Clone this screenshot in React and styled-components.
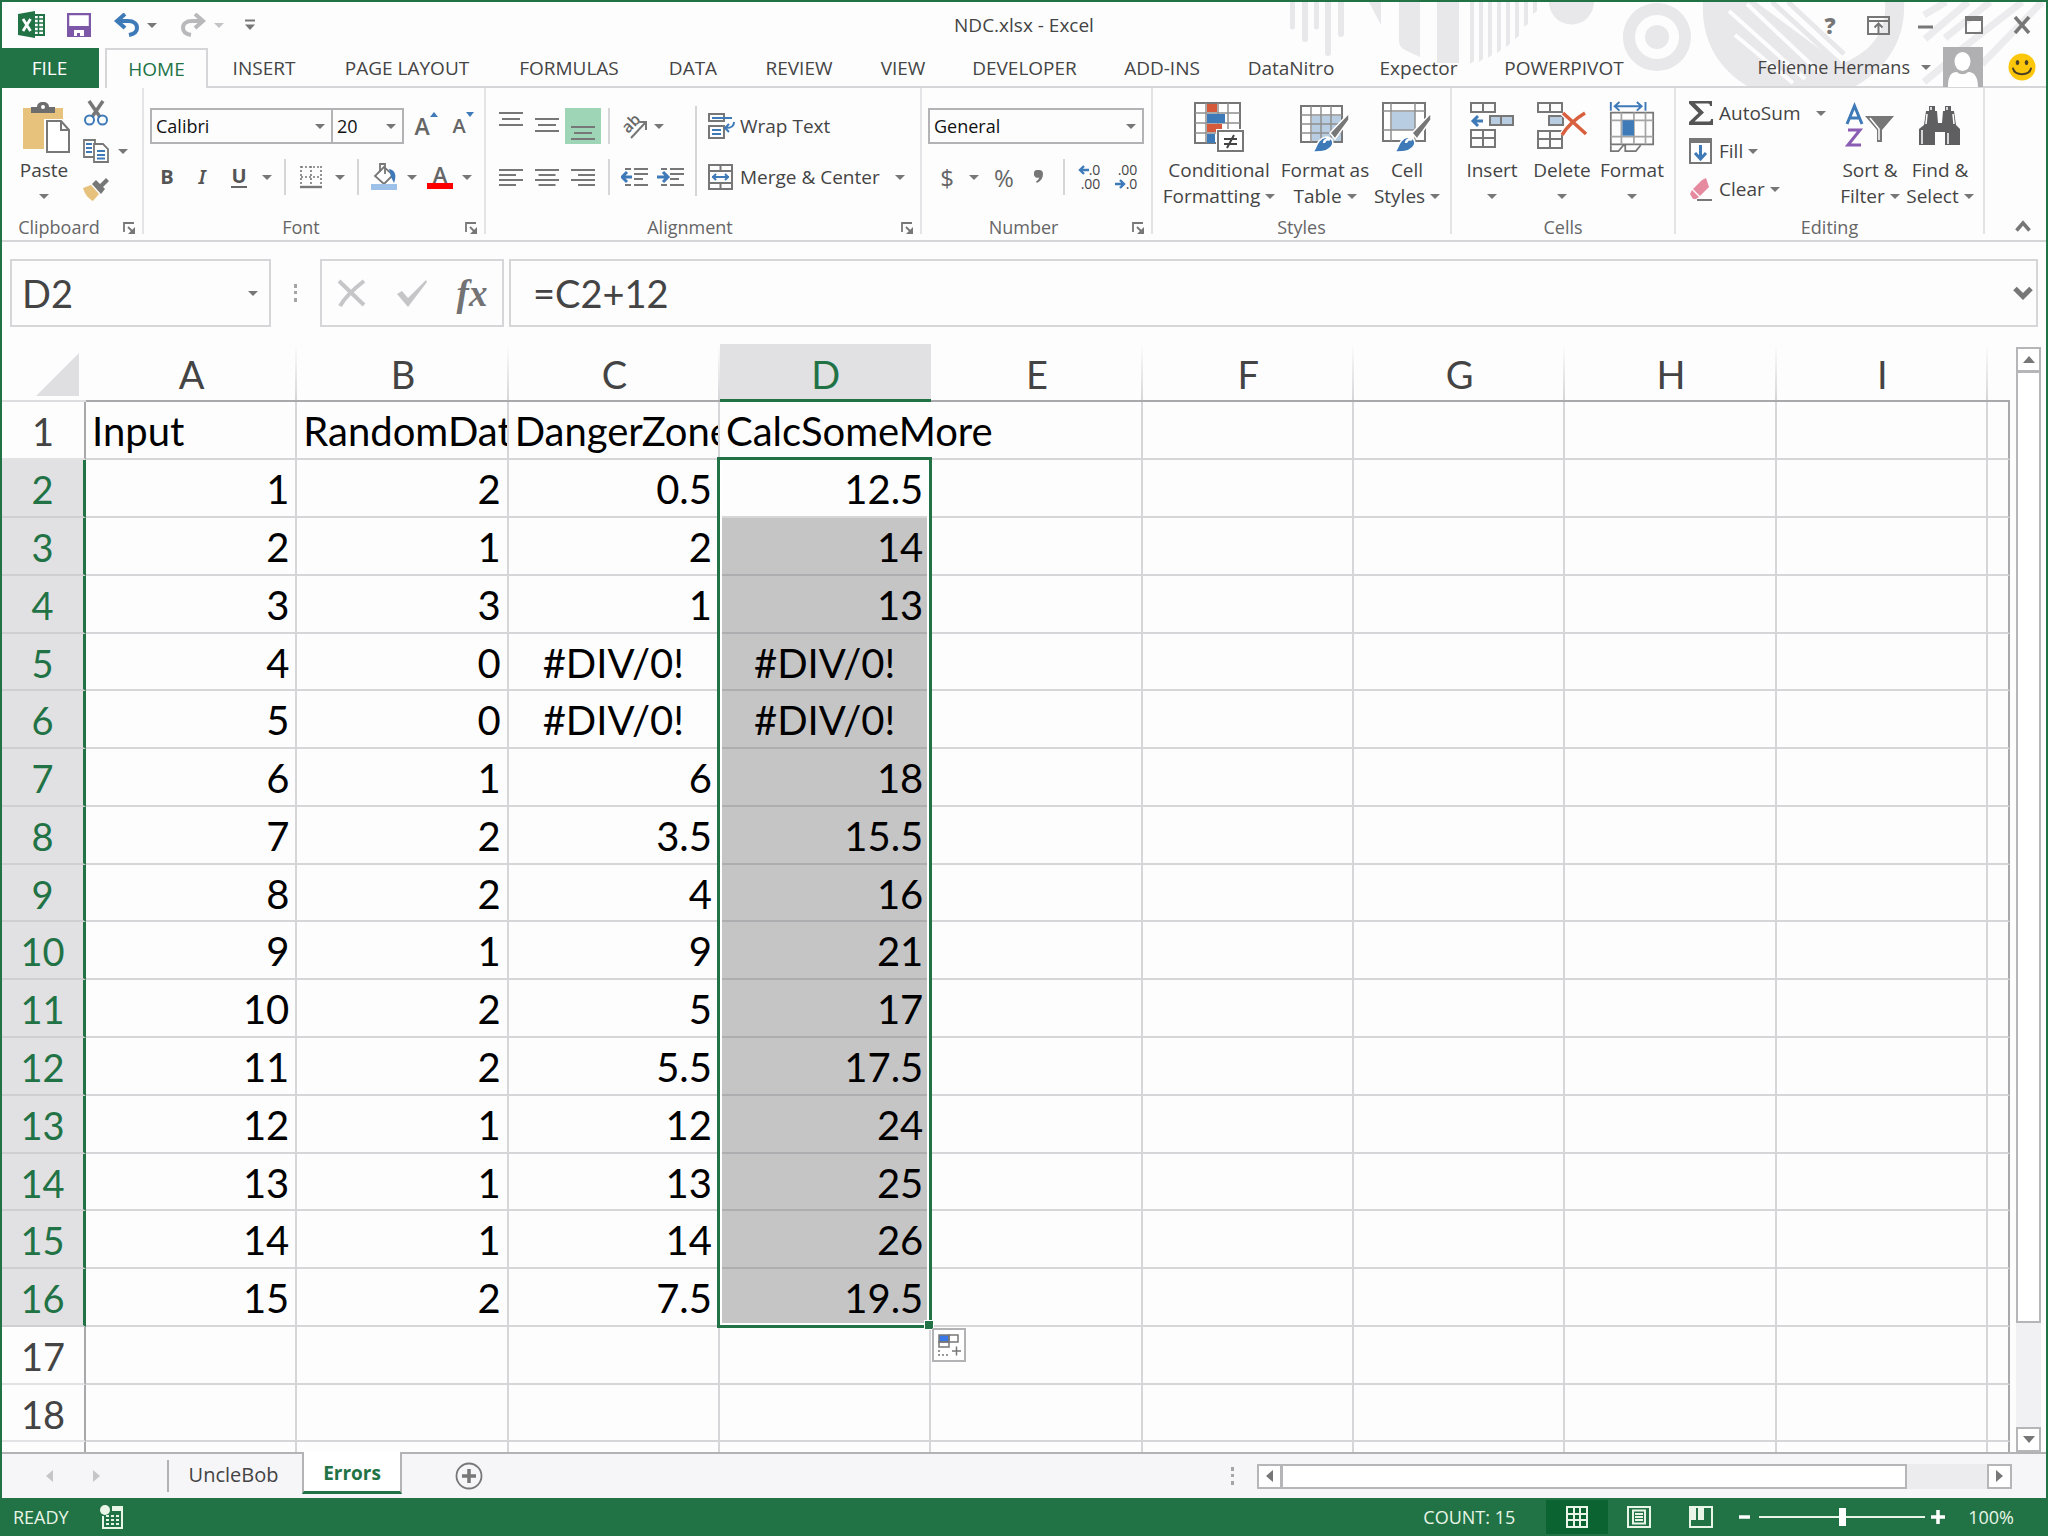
import React from 'react';
import styled, { createGlobalStyle, css } from 'styled-components';

const GREEN = '#217346';
const GREY = '#777777';
const BLUE = '#3f7ab8';
const LINE = '#d6d6d9';

const COLUMNS = ['A', 'B', 'C', 'D', 'E', 'F', 'G', 'H', 'I'];

const ROWS = [
  ['Input', 'RandomData', 'DangerZone', 'CalcSomeMore'],
  [1, 2, 0.5, 12.5],
  [2, 1, 2, 14],
  [3, 3, 1, 13],
  [4, 0, '#DIV/0!', '#DIV/0!'],
  [5, 0, '#DIV/0!', '#DIV/0!'],
  [6, 1, 6, 18],
  [7, 2, 3.5, 15.5],
  [8, 2, 4, 16],
  [9, 1, 9, 21],
  [10, 2, 5, 17],
  [11, 2, 5.5, 17.5],
  [12, 1, 12, 24],
  [13, 1, 13, 25],
  [14, 1, 14, 26],
  [15, 2, 7.5, 19.5],
  [],
  [],
];

const TABS = [
  { name: 'INSERT', width: 112 },
  { name: 'PAGE LAYOUT', width: 174 },
  { name: 'FORMULAS', width: 150 },
  { name: 'DATA', width: 98 },
  { name: 'REVIEW', width: 114 },
  { name: 'VIEW', width: 94 },
  { name: 'DEVELOPER', width: 149 },
  { name: 'ADD-INS', width: 126 },
  { name: 'DataNitro', width: 132 },
  { name: 'Expector', width: 123 },
  { name: 'POWERPIVOT', width: 168 },
];

function App() {
  return (
    <Window>
      <GlobalStyle />
      <Header>
        <Decoration />
        <TitleBar />
        <RibbonTabs />
      </Header>
      <Ribbon />
      <FormulaBar />
      <Sheet />
      <SheetBar />
      <StatusBar />
    </Window>
  );
}

export default App;

function TitleBar() {
  return (
    <TitleRow>
      <QuickAccess>
        <ExcelLogo />
        <Tool $w={66} aria-label="Save"><SaveIcon /></Tool>
        <Tool $w={30} aria-label="Undo"><UndoIcon color={BLUE} /></Tool>
        <Tool $w={20} aria-label="Undo list"><Caret /></Tool>
        <RedoTool $w={30} aria-label="Redo"><RedoIcon /></RedoTool>
        <Tool $w={22} aria-label="Redo list"><Caret $color="#c4c4c6" /></Tool>
        <Tool $w={40} aria-label="Customize Quick Access Toolbar">
          <svg width="12" height="12" viewBox="0 0 12 12">
            <path d="M1 1.5h10" stroke={GREY} strokeWidth="2" />
            <path d="M1 5.500h10L6 11z" fill={GREY} />
          </svg>
        </Tool>
      </QuickAccess>
      <Title>NDC.xlsx - Excel</Title>
      <WindowButtons>
        <Tool $w={48} aria-label="Help"><HelpMark>?</HelpMark></Tool>
        <Tool $w={48} aria-label="Ribbon display options">
          <svg width="23" height="19" viewBox="0 0 23 19" fill="none" stroke={GREY} strokeWidth="2">
            <path d="M1 1h21v17H1zM1 5h21M11.500 17V8M7.500 11.500l4-4 4 4" />
          </svg>
        </Tool>
        <Tool $w={48} aria-label="Minimize">
          <svg width="18" height="18" viewBox="0 0 18 18"><path d="M1 11h15" stroke={GREY} strokeWidth="3" /></svg>
        </Tool>
        <Tool $w={48} aria-label="Maximize">
          <svg width="18" height="18" viewBox="0 0 18 18"><path d="M1 1h16v16H1z" fill="none" stroke={GREY} strokeWidth="2" /><path d="M0 0h18v5H0z" fill={GREY} /></svg>
        </Tool>
        <Tool $w={48} aria-label="Close">
          <svg width="18" height="18" viewBox="0 0 18 18"><path d="M2 1l14 16M16 1L2 17" stroke={GREY} strokeWidth="3.500" /></svg>
        </Tool>
      </WindowButtons>
    </TitleRow>
  );
}

function RibbonTabs() {
  return (
    <TabRow>
      <FileTab>FILE</FileTab>
      <HomeTab>HOME</HomeTab>
      {TABS.map((tab) => (
        <Tab key={tab.name} $w={tab.width}>{tab.name}</Tab>
      ))}
      <TabFill />
      <Account>
        <AccountName>Felienne Hermans <Caret /></AccountName>
        <svg width="40" height="40" viewBox="0 0 40 40">
          <path d="M0 0h40v40H0z" fill="#b0afb2" />
          <ellipse cx="19.500" cy="14.500" rx="8" ry="9.500" fill="#fff" />
          <path d="M5 40c0-9 2-15 9-15 3 3 8 3 11 0 7 0 10 6 10 15z" fill="#fff" />
        </svg>
        <svg width="28" height="28" viewBox="0 0 28 28">
          <circle cx="14" cy="14" r="13.500" fill="#fcc60a" />
          <ellipse cx="9.500" cy="9.500" rx="1.800" ry="2.600" fill="#4a4025" />
          <ellipse cx="18.500" cy="9.500" rx="1.800" ry="2.600" fill="#4a4025" />
          <path d="M5 15.500c2 7.500 16 7.500 18 0" fill="none" stroke="#4a4025" strokeWidth="2" strokeLinecap="round" />
        </svg>
      </Account>
    </TabRow>
  );
}

function Ribbon() {
  return (
    <RibbonBar>
      <Group $w={142}>
        <GroupBody $left={7}>
          <BigButton $w={70}>
            <PasteIcon />
            <span>Paste</span>
            <Line><Caret /></Line>
          </BigButton>
          <Stack>
            <StackRow><Tool $w={34} aria-label="Cut"><CutIcon /></Tool></StackRow>
            <StackRow>
              <Tool $w={34} aria-label="Copy"><CopyIcon /></Tool>
              <Tool $w={20} aria-label="Copy options"><Caret /></Tool>
            </StackRow>
            <StackRow><Tool $w={34} aria-label="Format painter"><BrushIcon /></Tool></StackRow>
          </Stack>
        </GroupBody>
        <GroupFooter label="Clipboard" launcher />
      </Group>

      <Group $w={342}>
        <GroupBody $left={6}>
          <Rows>
            <Row>
              <Combo $w={183} label="Font" value="Calibri" />
              <Combo $w={71} label="Font size" value="20" joined />
              <Tool $w={44} aria-label="Increase font size">
                <FontSizeIcon up />
              </Tool>
              <Tool $w={30} aria-label="Decrease font size">
                <FontSizeIcon />
              </Tool>
            </Row>
            <Row>
              <Tool $w={34}><Letter $bold>B</Letter></Tool>
              <Tool $w={36}><Letter $italic>I</Letter></Tool>
              <Tool $w={38}><Letter $bold $underline>U</Letter></Tool>
              <Tool $w={18} aria-label="Underline style"><Caret /></Tool>
              <Divider $w={18} />
              <Tool $w={34} aria-label="Borders"><BordersIcon /></Tool>
              <Tool $w={24} aria-label="Border style"><Caret /></Tool>
              <Divider $w={12} />
              <Tool $w={40} aria-label="Fill color"><BucketIcon /></Tool>
              <Tool $w={16} aria-label="Fill color list"><Caret /></Tool>
              <Tool $w={40} aria-label="Font color"><ColorLetter>A</ColorLetter></Tool>
              <Tool $w={14} aria-label="Font color list"><Caret /></Tool>
            </Row>
          </Rows>
        </GroupBody>
        <GroupFooter label="Font" launcher />
      </Group>

      <Group $w={436}>
        <GroupBody $left={7}>
          <Rows>
            <Row>
              <Tool $w={36} aria-label="Top align"><Lines top={5} widths={[24, 18, 24]} center /></Tool>
              <Tool $w={36} aria-label="Middle align"><Lines top={11} widths={[24, 18, 24]} center /></Tool>
              <Tool $w={36} $active aria-label="Bottom align"><Lines top={19} widths={[24, 18, 24]} center /></Tool>
              <Divider $w={16} />
              <Tool $w={34} aria-label="Orientation"><OrientationIcon /></Tool>
              <Tool $w={16} aria-label="Orientation list"><Caret /></Tool>
            </Row>
            <Row>
              <Tool $w={36} aria-label="Align left"><Lines top={11} widths={[24, 17, 24, 17]} /></Tool>
              <Tool $w={36} aria-label="Center"><Lines top={11} widths={[24, 17, 24, 17]} center /></Tool>
              <Tool $w={36} aria-label="Align right"><Lines top={11} widths={[24, 17, 24, 17]} right /></Tool>
              <Divider $w={16} />
              <Tool $w={34} aria-label="Decrease indent"><IndentIcon /></Tool>
              <Tool $w={38} aria-label="Increase indent"><IndentIcon right /></Tool>
            </Row>
          </Rows>
          <TallDivider />
          <Rows>
            <Row>
              <TextTool><WrapIcon />Wrap Text</TextTool>
            </Row>
            <Row>
              <TextTool><MergeIcon />Merge &amp; Center</TextTool>
              <Tool $w={40} aria-label="Merge list"><Caret /></Tool>
            </Row>
          </Rows>
        </GroupBody>
        <GroupFooter label="Alignment" launcher />
      </Group>

      <Group $w={231}>
        <GroupBody $left={6}>
          <Rows>
            <Row>
              <Combo $w={216} label="Number format" value="General" />
            </Row>
            <Row>
              <Tool $w={38}><Symbol>$</Symbol></Tool>
              <Tool $w={16} aria-label="Currency list"><Caret /></Tool>
              <Tool $w={44}><Symbol>%</Symbol></Tool>
              <Tool $w={26} aria-label="Comma style">
                <svg width="10" height="14" viewBox="0 0 10 14"><path d="M5 0a4 4 0 0 1 4 4c0 4-2 7-6 9l-1-1.500c2-1.200 3-2.500 3.200-4A4 4 0 1 1 5 0z" fill={GREY} /></svg>
              </Tool>
              <Divider $w={24} />
              <Tool $w={26} aria-label="Increase decimal">
                <Decimals><span><Arrow left />.0</span><span>.00</span></Decimals>
              </Tool>
              <Tool $w={48} aria-label="Decrease decimal">
                <Decimals><span>.00</span><span><Arrow />.0</span></Decimals>
              </Tool>
            </Row>
          </Rows>
        </GroupBody>
        <GroupFooter label="Number" launcher />
      </Group>

      <Group $w={299}>
        <GroupBody $left={10}>
          <BigButton $w={112}>
            <ConditionalIcon />
            <span>Conditional</span>
            <Line>Formatting<Caret /></Line>
          </BigButton>
          <BigButton $w={100}>
            <FormatTableIcon />
            <span>Format as</span>
            <Line>Table<Caret /></Line>
          </BigButton>
          <BigButton $w={64}>
            <CellStylesIcon />
            <span>Cell</span>
            <Line>Styles<Caret /></Line>
          </BigButton>
        </GroupBody>
        <GroupFooter label="Styles" />
      </Group>

      <Group $w={224}>
        <GroupBody $left={5}>
          <BigButton $w={70}>
            <InsertIcon />
            <span>Insert</span>
            <Line><Caret /></Line>
          </BigButton>
          <BigButton $w={70}>
            <DeleteIcon />
            <span>Delete</span>
            <Line><Caret /></Line>
          </BigButton>
          <BigButton $w={70}>
            <FormatIcon />
            <span>Format</span>
            <Line><Caret /></Line>
          </BigButton>
        </GroupBody>
        <GroupFooter label="Cells" />
      </Group>

      <Group $w={309}>
        <GroupBody $left={12}>
          <Stack $w={154}>
            <StackRow>
              <TextTool><SumIcon />AutoSum</TextTool>
              <Tool $w={40} aria-label="AutoSum list"><Caret /></Tool>
            </StackRow>
            <StackRow><TextTool><FillIcon />Fill<Caret /></TextTool></StackRow>
            <StackRow><TextTool><EraserIcon />Clear<Caret /></TextTool></StackRow>
          </Stack>
          <BigButton $w={56}>
            <SortIcon />
            <span>Sort &amp;</span>
            <Line>Filter<Caret /></Line>
          </BigButton>
          <BigButton $w={84}>
            <BinocularsIcon />
            <span>Find &amp;</span>
            <Line>Select<Caret /></Line>
          </BigButton>
        </GroupBody>
        <GroupFooter label="Editing" />
      </Group>

      <CollapseButton aria-label="Collapse the ribbon">
        <svg width="16" height="12" viewBox="0 0 16 12"><path d="M1.500 10.500L8 3l6.500 7.500" fill="none" stroke={GREY} strokeWidth="3.500" /></svg>
      </CollapseButton>
    </RibbonBar>
  );
}

function GroupFooter({ label, launcher }) {
  return (
    <Footer>
      <GroupLabel>{label}</GroupLabel>
      {launcher && (
        <Tool $w={26} aria-label={`${label} settings`}>
          <svg width="13" height="13" viewBox="0 0 13 13">
            <path d="M1 10V1h10M5 5l4 4" fill="none" stroke={GREY} strokeWidth="1.800" />
            <path d="M12 5v7H5z" fill={GREY} />
          </svg>
        </Tool>
      )}
    </Footer>
  );
}

function Combo({ $w, label, value, joined }) {
  return (
    <ComboBox $w={$w} $joined={joined}>
      <select aria-label={label} defaultValue={value}>
        <option>{value}</option>
      </select>
      <Caret />
    </ComboBox>
  );
}

function FormulaBar() {
  return (
    <FormulaRow>
      <NameBox>
        <input aria-label="Name box" defaultValue="D2" />
        <Tool $w={32} aria-label="Name list"><Caret /></Tool>
      </NameBox>
      <Dots />
      <FormulaButtons>
        <Tool $w={60} aria-label="Cancel">
          <svg width="30" height="28" viewBox="0 0 30 28"><path d="M2 2l25 24M27 2C18 9 8 18 3 27" stroke="#c6c5c8" strokeWidth="4" fill="none" /></svg>
        </Tool>
        <Tool $w={60} aria-label="Enter">
          <svg width="32" height="28" viewBox="0 0 32 28"><path d="M1 15l5-3 6 7L30 1l1 2-19 25z" fill="#c6c5c8" /></svg>
        </Tool>
        <Tool $w={60} aria-label="Insert function"><Fx>fx</Fx></Tool>
      </FormulaButtons>
      <FormulaBox>
        <input aria-label="Formula" defaultValue="=C2+12" />
        <Tool $w={26} aria-label="Expand formula bar">
          <svg width="20" height="14" viewBox="0 0 20 14"><path d="M2 2.500l8 8 8-8" fill="none" stroke={GREY} strokeWidth="5" /></svg>
        </Tool>
      </FormulaBox>
    </FormulaRow>
  );
}

function Sheet() {
  return (
    <SheetArea>
      <GridWrap>
        <Grid>
          <colgroup>
            <HeadCol />
            {COLUMNS.map((name) => <col key={name} />)}
            <RestCol />
          </colgroup>
          <thead>
            <tr>
              <Corner>
                <svg width="44" height="44" viewBox="0 0 44 44"><path d="M43 0v43H0z" fill="#dfdee1" /></svg>
              </Corner>
              {COLUMNS.map((name) => (
                <ColumnHead key={name} scope="col" $selected={name === 'D'}>{name}</ColumnHead>
              ))}
              <ColumnHead as="td" $last />
            </tr>
          </thead>
          <tbody>
            {ROWS.map((row, r) => {
              const inRange = r >= 1 && r <= 15;
              return (
                <tr key={r}>
                  <RowHead scope="row" $selected={inRange}>{r + 1}</RowHead>
                  {COLUMNS.map((name, c) => {
                    const value = row[c];
                    return (
                      <Cell
                        key={name}
                        $align={r === 0 ? 'left' : typeof value === 'string' ? 'center' : 'right'}
                        $filled={name === 'D' && inRange && r > 1}
                        $spill={name === 'D' && r < 2}
                        $open={name === 'D' && r === 0}
                      >
                        {value}
                        {name === 'D' && r === 1 && (
                          <Selection>
                            <FillHandle />
                            <AutoFill aria-label="Auto fill options">
                              <svg width="24" height="24" viewBox="0 0 24 24" fill="none" stroke={GREY} strokeWidth="1.500">
                                <path d="M2 2h10v7H2z" fill="#3b78e7" />
                                <path d="M12 2h9v7h-9zM2 9h10v5H2zM15 18h9M19.500 13.500v9" />
                                <path d="M2 17v5h10" strokeDasharray="2 2" />
                              </svg>
                            </AutoFill>
                          </Selection>
                        )}
                      </Cell>
                    );
                  })}
                  <Cell $last />
                </tr>
              );
            })}
            <CutRow>
              <RowHead as="td" />
              {COLUMNS.map((name) => <Cell key={name} />)}
              <Cell $last />
            </CutRow>
          </tbody>
        </Grid>
      </GridWrap>
      <VerticalScroll>
        <ScrollButton aria-label="Scroll up"><Triangle $dir="up" /></ScrollButton>
        <VerticalThumb />
        <VerticalTrack />
        <ScrollButton aria-label="Scroll down"><Triangle $dir="down" /></ScrollButton>
      </VerticalScroll>
    </SheetArea>
  );
}

function SheetBar() {
  return (
    <SheetTabs>
      <SheetNav>
        <Tool $w={47} aria-label="Previous sheet"><Triangle $dir="left" $pale /></Tool>
        <Tool $w={47} aria-label="Next sheet"><Triangle $dir="right" $pale /></Tool>
      </SheetNav>
      <SheetTab>UncleBob</SheetTab>
      <SheetTab $active>Errors</SheetTab>
      <SheetRest>
        <Tool $w={44} aria-label="New sheet">
          <svg width="28" height="28" viewBox="0 0 28 28" fill="none" stroke={GREY}>
            <circle cx="14" cy="14" r="12.500" strokeWidth="1.800" />
            <path d="M7 14h14M14 7v14" strokeWidth="3.500" />
          </svg>
        </Tool>
        <Dots />
        <HorizontalScroll>
          <ScrollButton aria-label="Scroll left"><Triangle $dir="left" /></ScrollButton>
          <HorizontalThumb />
          <ScrollButton aria-label="Scroll right"><Triangle $dir="right" /></ScrollButton>
        </HorizontalScroll>
      </SheetRest>
    </SheetTabs>
  );
}

function StatusBar() {
  return (
    <Status>
      <Ready>READY</Ready>
      <Tool $w={38} aria-label="Record macro">
        <svg width="24" height="24" viewBox="0 0 24 24">
          <circle cx="5" cy="5" r="5" fill="#e9f5e6" />
          <path d="M12 1h11v5H12z" fill="#e9f5e6" />
          <path d="M3 11v12h19V4" fill="none" stroke="#e9f5e6" strokeWidth="2" />
          <path d="M6 11h14M6 15h14M6 19h14" stroke="#e9f5e6" strokeWidth="2" strokeDasharray="3 2" />
        </svg>
      </Tool>
      <Count>COUNT: 15</Count>
      <View $active aria-label="Normal view">
        <svg width="22" height="22" viewBox="0 0 22 22" fill="none" stroke="#e9f5e6" strokeWidth="2">
          <path d="M1 1h20v20H1zM1 8h20M1 14h20M8 1v20M14 1v20" />
        </svg>
      </View>
      <View aria-label="Page layout view">
        <svg width="24" height="22" viewBox="0 0 24 22" fill="none" stroke="#e9f5e6" strokeWidth="2">
          <path d="M1 1h22v20H1zM6 4.500h12v13H6zM8 8h8M8 11h8M8 14h8" />
        </svg>
      </View>
      <View aria-label="Page break preview">
        <svg width="24" height="22" viewBox="0 0 24 22">
          <path d="M1 1h22v20H1z" fill="none" stroke="#e9f5e6" strokeWidth="2" />
          <path d="M2 1h5v13H2zM9 1h6v13H9z" fill="#e9f5e6" />
        </svg>
      </View>
      <Tool $w={26} aria-label="Zoom out">
        <svg width="12" height="16" viewBox="0 0 12 16"><path d="M0 8h11" stroke="#fff" strokeWidth="3.500" /></svg>
      </Tool>
      <Zoom type="range" aria-label="Zoom" min="0" max="200" defaultValue="100" />
      <Tool $w={26} aria-label="Zoom in">
        <svg width="14" height="16" viewBox="0 0 14 16"><path d="M0 8h14M7 1v14" stroke="#fff" strokeWidth="3.500" /></svg>
      </Tool>
      <Percent>100%</Percent>
    </Status>
  );
}

/* drawings */

function Decoration() {
  const bars = [62, 60, 56, 51, 45, 37, 25, 12];
  return (
    <Backdrop viewBox="-2 0 760 86" aria-hidden="true">
      <g fill="#e8e7e9">
        <path d="M2 0h5v25a2.500 2.500 0 0 1-5 0zM14 0h6v37a3 3 0 0 1-6 0zM26 0h5v25a2.500 2.500 0 0 1-5 0zM37 0h6v51a3 3 0 0 1-6 0zM50 0h6v32a3 3 0 0 1-6 0z" />
        <path d="M81 0h12v23zM111 0h21v55l-15-7c-4-2-6-5-6-9zM149 0h22v61h-22z" />
        {bars.map((h, i) => <path key={h} d={`M${182 + i * 9} 0h4v${h - 3}l-4 3z`} />)}
        <path d="M261 0a22 22 0 0 0 45 0z" />
        <path fillRule="evenodd" d="M369 1a34 34 0 1 1-.1 0zM369 13a22 22 0 1 0 .1 0z" />
        <circle cx="369" cy="35" r="12" />
        <path d="M415 0h201c2 38-18 68-52 86H462C428 66 413 36 415 0z" />
      </g>
      <path d="M468 0h129c2 28-12 50-45 62z" fill="#fdfdfe" />
      <g stroke="#fdfdfe" strokeWidth="4" fill="none">
        <path d="M441 9l76 68M459 2l72 68M447 33l58 48" />
      </g>
      <g stroke="#e8e7e9" strokeWidth="5" fill="none">
        <path d="M484 0l68 62M500 0l56 52" />
      </g>
      <g stroke="#ececee" strokeWidth="7" fill="none">
        <path d="M658 0l-22 13M680 0l-43 37M702 0l-45 36M734 0l-72 56M754 0l-60 62M660 60l-24 20" />
      </g>
    </Backdrop>
  );
}

function ExcelLogo() {
  return (
    <svg width="28" height="28" viewBox="0 0 28 28">
      <path d="M14 4h12v20H14z" fill="#fff" stroke={GREEN} strokeWidth="2" />
      <path d="M16 8h9M16 12h9M16 16h9M16 20h9M20.500 5v18" stroke={GREEN} strokeWidth="1.500" />
      <path d="M0 3l17-3v27L0 24z" fill={GREEN} />
      <path d="M5 8l7.500 12M12.500 8L5 20" stroke="#fff" strokeWidth="2.800" />
    </svg>
  );
}

function SaveIcon() {
  return (
    <svg width="24" height="24" viewBox="0 0 24 24">
      <path d="M1 1h22v22H1z" fill="#fff" stroke="#7d58a8" strokeWidth="2.500" />
      <path d="M1 13h22v10H1z" fill="#7d58a8" />
      <path d="M7 17h10v6h-4v-3h-3v3H7z" fill="#fff" />
    </svg>
  );
}

function UndoIcon({ color }) {
  return (
    <svg width="26" height="24" viewBox="0 0 26 24" fill="none" stroke={color} strokeWidth="4">
      <path d="M3 8h11c6 0 9 3 9 7s-3 6-8 7" />
      <path d="M11 1L3 8l8 7" />
    </svg>
  );
}

function RedoIcon() {
  return (
    <svg width="26" height="24" viewBox="0 0 26 24" fill="none" stroke="#b9b9bc" strokeWidth="4">
      <path d="M23 8H12c-6 0-9 3-9 7s3 6 8 7" />
      <path d="M15 1l8 7-8 7" />
    </svg>
  );
}

function PasteIcon() {
  return (
    <svg width="54" height="52" viewBox="-4 0 54 52">
      <path d="M2 7h40v41H2z" fill="#e6c27c" />
      <path d="M10 12V6h6c0-3 2-5 6-5s6 2 6 5h6v6z" fill="#6d6d6d" />
      <circle cx="22" cy="6" r="2" fill="#fff" />
      <path d="M23 18h28v34H23z" fill="#fff" />
      <path d="M26 20h14l8 9v22H26z" fill="#fff" stroke={GREY} strokeWidth="2" />
      <path d="M40 20v9h8" fill="none" stroke={GREY} strokeWidth="2" />
    </svg>
  );
}

function CutIcon() {
  return (
    <svg width="26" height="26" viewBox="0 0 26 26" fill="none">
      <path d="M6 1l11 16M20 1L9 17" stroke={GREY} strokeWidth="3.500" />
      <circle cx="6.500" cy="20" r="4.500" stroke={BLUE} strokeWidth="2" />
      <circle cx="19.500" cy="20" r="4.500" stroke={BLUE} strokeWidth="2" />
    </svg>
  );
}

function CopyIcon() {
  return (
    <svg width="26" height="24" viewBox="0 0 26 24" fill="#fff" stroke={GREY} strokeWidth="1.800">
      <path d="M1 1h11v17H1z" />
      <path d="M3 5h6M3 9h6M3 13h6" stroke={BLUE} />
      <path d="M11 5h9l5 5v13H11z" />
      <path d="M14 12h8M14 16h8M14 19.500h8" stroke={BLUE} />
    </svg>
  );
}

function BrushIcon() {
  return (
    <svg width="28" height="24" viewBox="0 0 28 24">
      <path d="M1 11l8-3 8 9-6 7C7 22 3 18 1 11z" fill="#e6c27c" />
      <path d="M10 7l4-4 4 4 6-6 3 3-6 6 2 2-4 5z" fill={GREY} />
    </svg>
  );
}

function FontSizeIcon({ up }) {
  return (
    <SizeLetter $up={up}>
      A
      <svg width="8" height="6" viewBox="0 0 8 6"><path d={up ? 'M0 5l4-5 4 5z' : 'M0 0h8L4 5z'} fill={BLUE} /></svg>
    </SizeLetter>
  );
}

function BordersIcon() {
  return (
    <svg width="22" height="24" viewBox="0 0 22 24" fill="none" stroke={GREY}>
      <path d="M1 2h20M1 12h20M1 1v20M11 1v20M21 1v20" strokeWidth="1.600" strokeDasharray="2 2" />
      <path d="M0 22h22" strokeWidth="2.400" />
    </svg>
  );
}

function BucketIcon() {
  return (
    <svg width="28" height="28" viewBox="0 0 28 28">
      <path d="M14 4L5 13l9 8 9-9z" fill="#fff" stroke={GREY} strokeWidth="1.800" />
      <path d="M10 9V1h5v10" fill="none" stroke={GREY} strokeWidth="1.800" />
      <path d="M19 6c6 1 8 6 5 14l-3-6z" fill={BLUE} />
      <path d="M1 21h26v6H1z" fill="#9dc1e8" />
    </svg>
  );
}

function Lines({ top, widths, center, right }) {
  const step = widths.length > 3 ? 5 : 6;
  return (
    <svg width="24" height="36" viewBox="0 0 24 36">
      {widths.map((w, i) => {
        const x = center ? (24 - w) / 2 : right ? 24 - w : 0;
        return <path key={i} d={`M${x} ${top + i * step}h${w}`} stroke={GREY} strokeWidth="2" />;
      })}
    </svg>
  );
}

function OrientationIcon() {
  return (
    <svg width="30" height="28" viewBox="0 0 30 28" overflow="visible">
      <text transform="translate(9 22) rotate(-45)" fontFamily="Open Sans" fontSize="16" fontWeight="600" fill="#666">ab</text>
      <path d="M12 26L26 11M19 10h8v8" fill="none" stroke={GREY} strokeWidth="2" />
    </svg>
  );
}

function IndentIcon({ right }) {
  return (
    <svg width="27" height="20" viewBox="0 0 27 20" fill="none" stroke={GREY} strokeWidth="2">
      <path d="M4 2h6M13 2h14M13 7h14M13 12h9M4 18h6M13 18h14" />
      <path d={right ? 'M0 10h10M6 5l5 5-5 5' : 'M11 10H2M6 5l-5 5 5 5'} stroke={BLUE} strokeWidth="3" />
    </svg>
  );
}

function WrapIcon() {
  return (
    <svg width="27" height="27" viewBox="0 0 27 27" fill="none" stroke={GREY} strokeWidth="2">
      <path d="M1 1h15v7H1zM1 13h15v12H1z" />
      <path d="M4 5h20M4 17h9M4 21h9M26 9c0 5-3 6-8 6M21 11l-4 4 4 4" stroke={BLUE} />
    </svg>
  );
}

function MergeIcon() {
  return (
    <svg width="27" height="27" viewBox="0 0 27 27" fill="none" stroke={GREY} strokeWidth="2">
      <path d="M1 1h23v24H1zM1 7h23M1 19h23M12.500 1v6M12.500 19v6" />
      <path d="M4 13h17M8 10l-3 3 3 3M17 10l3 3-3 3" stroke={BLUE} />
    </svg>
  );
}

function Arrow({ left }) {
  return (
    <svg width="11" height="10" viewBox="0 0 11 10">
      <path d={left ? 'M11 5H2M6 1L2 5l4 4' : 'M0 5h9M5 1l4 4-4 4'} fill="none" stroke={BLUE} strokeWidth="2.400" />
    </svg>
  );
}

function ConditionalIcon() {
  return (
    <svg width="50" height="52" viewBox="0 0 50 52">
      <path d="M1 2h45v40H1z" fill="#fff" stroke={GREY} strokeWidth="2" />
      <path d="M1 12h45M1 22h45M1 32h45M12 2v40M34 2v40M24 2v40" stroke="#8f8f8f" strokeWidth="1.500" />
      <path d="M13 3h10v8H13zM13 23h15v8H13z" fill="#d55a3c" />
      <path d="M13 13h18v9H13zM13 33h8v9h-8z" fill={BLUE} />
      <path d="M22 28h28v24H22z" fill="#fff" />
      <path d="M24 30h25v20H24z" fill="#fff" stroke={GREY} strokeWidth="2" />
      <path d="M30 38h13M30 43h13M40 34l-7 13" stroke="#444" strokeWidth="2" />
    </svg>
  );
}

function PaintBrush() {
  return (
    <>
      <path d="M49 12L30 32l5 6 14-19z" fill={GREY} stroke="#fff" strokeWidth="1.500" />
      <path d="M12 51c5-1 3-13 14-15 7 0 9 7 4 11-4 4-10 4-18 4z" fill={BLUE} stroke="#fff" strokeWidth="1.500" />
      <path d="M24 42c0-3 4-5 6-3" stroke="#fff" strokeWidth="2.500" fill="none" />
    </>
  );
}

function FormatTableIcon() {
  return (
    <svg width="50" height="52" viewBox="0 0 50 52">
      <path d="M1 5h41v36H1z" fill="#fff" stroke={GREY} strokeWidth="2" />
      <path d="M12 15h29v25H12z" fill="#b9cde2" />
      <path d="M1 14h41M1 23h41M1 32h41M11 5v36M21 5v36M31 5v36" stroke="#8f8f8f" strokeWidth="1.500" />
      <PaintBrush />
    </svg>
  );
}

function CellStylesIcon() {
  return (
    <svg width="50" height="52" viewBox="0 0 50 52">
      <path d="M1 2h42v38H1z" fill="#fff" stroke={GREY} strokeWidth="2" />
      <path d="M10 11h23v18H10z" fill="#b9cde2" />
      <path d="M1 10h42M1 29h42M9 2v38M33 2v38" stroke="#8f8f8f" strokeWidth="1.500" />
      <PaintBrush />
    </svg>
  );
}

function InsertIcon() {
  return (
    <svg width="46" height="52" viewBox="0 0 46 52" fill="none" stroke={GREY} strokeWidth="2">
      <path d="M2 2h24v9H2zM14 2v9M2 29h24v17H2zM14 29v17M2 37h24" />
      <path d="M21 15h23v9H21zM32 15v9" fill="#b9cde2" />
      <path d="M14 20H5M9 15l-5 5 5 5" stroke={BLUE} strokeWidth="3" />
    </svg>
  );
}

function DeleteIcon() {
  return (
    <svg width="50" height="52" viewBox="0 0 50 52" fill="none" stroke={GREY} strokeWidth="2">
      <path d="M1 2h24v9H1zM13 2v9M1 30h24v17H1zM13 30v17M1 38h24" />
      <path d="M12 15h14v9H12z" fill="#b9cde2" />
      <path d="M26 12l23 21M48 12C38 18 30 26 25 34" stroke="#fff" strokeWidth="6" />
      <path d="M26 12l23 21M48 12C38 18 30 26 25 34" stroke="#d9603f" strokeWidth="3.500" />
    </svg>
  );
}

function FormatIcon() {
  return (
    <svg width="48" height="54" viewBox="0 0 48 54" fill="none" stroke={GREY} strokeWidth="1.800">
      <path d="M2 12h44v33H2z" />
      <path d="M2 20h44M2 37h44M13 12v33M26 12v33M38 12v33" stroke="#a5a5a5" />
      <path d="M14 20h12v16H14z" fill={BLUE} stroke="none" />
      <path d="M2 46v6h8l5-6h2v6h11l5-6" />
      <path d="M2 1v9M38 1v9M6 5.500h28M11 1L6 5.500l5 4.500M29 1l5 4.500-5 4.500" stroke={BLUE} strokeWidth="2" />
    </svg>
  );
}

function SumIcon() {
  return (
    <svg width="26" height="26" viewBox="0 0 26 26">
      <path d="M1 1h23v5h-2c0-2-1-2.500-3-2.500H7l9 9-9.500 9H20c2 0 3-.5 3-2.500h2V25H1v-3l9.500-9L1 3.500z" fill="#555" />
    </svg>
  );
}

function FillIcon() {
  return (
    <svg width="26" height="26" viewBox="0 0 26 26" fill="none">
      <path d="M2 1h21v24H2z" fill="#fff" stroke={GREY} strokeWidth="2" />
      <path d="M1 0h23v5H1z" fill={GREY} />
      <path d="M12.500 7v14M7 15l5.500 6 5.500-6" stroke={BLUE} strokeWidth="3" />
    </svg>
  );
}

function EraserIcon() {
  return (
    <svg width="26" height="26" viewBox="0 0 26 26">
      <path d="M14 4l4-2 3 9-9 9-7-7z" fill="#e68a9f" />
      <path d="M4 14l7 7-3 2H5l-3-5z" fill="#e68a9f" />
      <path d="M9 24h15" stroke={GREY} strokeWidth="2" />
    </svg>
  );
}

function SortIcon() {
  return (
    <svg width="50" height="52" viewBox="0 0 50 52">
      <path d="M2 23L9.500 5 17 23M5 17h9" fill="none" stroke={BLUE} strokeWidth="3" />
      <path d="M3 29h12L3 44h13" fill="none" stroke="#8a5cb4" strokeWidth="3" />
      <path d="M20 15h29L37 29v12h-5V29z" fill={GREY} />
      <path d="M25 17l9 11v11" fill="none" stroke="#fff" strokeWidth="1.500" />
    </svg>
  );
}

function BinocularsIcon() {
  return (
    <svg width="46" height="52" viewBox="0 0 46 52">
      <path d="M12 5h6v5h2l1 12h4l1-12h2V5h6v5h3l2 14 4 4v16H28V31h-10v13H2V28l5-4 2-14h3z" fill="#5f5f61" />
      <path d="M14 6v3M30 6v3M10 13l-1 10M36 13l1 10M5 29v14M31 32v11" stroke="#fff" strokeWidth="1.500" />
    </svg>
  );
}

/* styles */

const GlobalStyle = createGlobalStyle`
  * {
    box-sizing: border-box;
  }

  body {
    margin: 0;
    background: #fdfdfe;
  }

  body, button, input, select {
    font-family: 'Open Sans', 'Noto Sans', sans-serif;
    font-size: 19px;
    color: #444444;
  }

  button {
    background: none;
    border: 0;
    padding: 0;
    margin: 0;
  }

  svg {
    display: block;
    flex-shrink: 0;
  }
`;

const Window = styled.div`
  display: flex;
  flex-direction: column;
  min-height: 100vh;
  border: 2px solid ${GREEN};
  border-bottom: 0;
`;

const Header = styled.header`
  position: relative;
`;

const Backdrop = styled.svg`
  position: absolute;
  top: 0;
  right: 0;
  width: 760px;
  height: 86px;
`;

const TitleRow = styled.div`
  position: relative;
  display: grid;
  grid-template-columns: 1fr auto 1fr;
  align-items: center;
  height: 46px;
`;

const QuickAccess = styled.div`
  display: flex;
  align-items: center;
  padding-left: 16px;
  height: 46px;
`;

const Title = styled.div`
  font-size: 19px;
`;

const WindowButtons = styled.div`
  display: flex;
  justify-content: flex-end;
  height: 46px;
`;

const HelpMark = styled.span`
  font-size: 22px;
  font-weight: 800;
  color: ${GREY};
`;

const Caret = styled.i`
  flex-shrink: 0;
  width: 0;
  height: 0;
  border: 5px solid transparent;
  border-top-color: ${(props) => props.$color || GREY};
  border-bottom: 0;
`;

const Tool = styled.button`
  display: flex;
  align-items: center;
  justify-content: center;
  flex: 0 0 ${(props) => props.$w}px;
  align-self: stretch;
  background: ${(props) => (props.$active ? '#9fd5b7' : 'none')};
`;

const RedoTool = styled(Tool)`
  margin-left: 16px;
`;

const TabRow = styled.nav`
  position: relative;
  display: flex;
  height: 40px;
  margin-left: -2px;
`;

const Tab = styled.button`
  flex: 0 1 ${(props) => props.$w}px;
  padding-top: 2px;
  border-bottom: 2px solid ${LINE};
  white-space: nowrap;
`;

const FileTab = styled(Tab)`
  flex: 0 0 99px;
  background: ${GREEN};
  border-color: ${GREEN};
  color: #fff;
`;

const HomeTab = styled(Tab)`
  flex: 0 0 103px;
  margin-left: 6px;
  padding-top: 0;
  background: #fdfdfe;
  border: 2px solid ${LINE};
  border-bottom: 0;
  color: ${GREEN};
`;

const TabFill = styled.div`
  flex: 1;
  border-bottom: 2px solid ${LINE};
`;

const Account = styled.div`
  display: flex;
  align-items: center;
  gap: 25px;
  padding-right: 10px;
  border-bottom: 2px solid ${LINE};
`;

const AccountName = styled.button`
  display: flex;
  align-items: center;
  gap: 11px;
  font-size: 18px;
  margin-right: -13px;
`;

const RibbonBar = styled.section`
  display: flex;
  height: 154px;
  border-bottom: 2px solid ${LINE};
`;

const Group = styled.div`
  display: flex;
  flex-direction: column;
  flex: 0 0 ${(props) => props.$w}px;
  min-width: 0;
  border-right: 2px solid #e4e4e7;
  margin-bottom: 6px;
  padding-top: 8px;
`;

const GroupBody = styled.div`
  display: flex;
  flex: 1;
  padding-left: ${(props) => props.$left}px;
`;

const Footer = styled.div`
  display: flex;
  height: 20px;
  margin-bottom: -4px;
`;

const GroupLabel = styled.div`
  flex: 1;
  text-align: center;
  font-size: 18px;
  line-height: 18px;
  color: #666666;
`;

const Rows = styled.div`
  display: flex;
  flex-direction: column;
  gap: 15px;
  padding-top: 12px;
`;

const Row = styled.div`
  display: flex;
  height: 36px;
`;

const Stack = styled.div`
  display: flex;
  flex-direction: column;
  flex: 0 0 ${(props) => (props.$w ? `${props.$w}px` : 'auto')};
  min-width: 0;
  margin-top: -2px;
`;

const StackRow = styled.div`
  display: flex;
  height: 38px;
`;

const Divider = styled.span`
  flex: 0 0 ${(props) => props.$w}px;
  background: linear-gradient(${LINE}, ${LINE}) center / 2px 100% no-repeat;
`;

const TallDivider = styled.span`
  flex: 0 0 2px;
  height: 90px;
  margin: 10px 11px 0 6px;
  background: ${LINE};
`;

const TextTool = styled.button`
  display: flex;
  align-items: center;
  gap: 5px;
  white-space: nowrap;
`;

const BigButton = styled.button`
  display: flex;
  flex-direction: column;
  align-items: center;
  flex: 0 0 ${(props) => props.$w}px;
  min-width: 0;
  line-height: 26px;
  white-space: nowrap;
  padding-top: 5px;

  svg {
    height: 52px;
    margin-bottom: 4px;
  }
`;

const Line = styled.span`
  display: flex;
  align-items: center;
  gap: 5px;
  height: 26px;
`;

const ComboBox = styled.div`
  display: grid;
  flex: 0 0 ${(props) => props.$w}px;
  align-items: center;
  border: 2px solid #b3b3b6;
  ${(props) => props.$joined && css`
    border-left: 0;
  `}

  select, ${Caret} {
    grid-area: 1 / 1;
  }

  select {
    appearance: none;
    width: 100%;
    border: 0;
    padding: 0 0 0 4px;
    background: none;
    color: #111;
    font-size: 18px;
  }

  ${Caret} {
    justify-self: end;
    margin-right: 6px;
    pointer-events: none;
  }
`;

const Letter = styled.span`
  font-size: 20px;
  line-height: 20px;
  color: #555;
  font-weight: ${(props) => (props.$bold ? 700 : 600)};
  ${(props) => props.$italic && css`
    font-family: 'Noto Sans', sans-serif;
    font-style: italic;
  `}
  ${(props) => props.$underline && css`
    border-bottom: 2px solid #666;
  `}
`;

const SizeLetter = styled.span`
  display: flex;
  align-items: flex-start;
  font-size: ${(props) => (props.$up ? 23 : 20)}px;
  line-height: 28px;
  font-weight: 600;
  color: #666;
`;

const ColorLetter = styled.span`
  width: 26px;
  height: 24px;
  border-bottom: 6px solid #ff0000;
  font-size: 22px;
  font-weight: 600;
  line-height: 18px;
  color: #666;
`;

const Symbol = styled.span`
  font-size: 24px;
  color: #666;
`;

const Decimals = styled.span`
  display: flex;
  flex-direction: column;
  align-items: flex-end;
  font-size: 14px;
  line-height: 14px;

  span {
    display: flex;
    align-items: center;
  }
`;

const CollapseButton = styled.button`
  display: flex;
  align-items: flex-end;
  justify-content: center;
  flex: 1;
  padding: 0 0 8px 14px;
`;

const FormulaRow = styled.section`
  display: flex;
  height: 102px;
  padding: 17px 8px;
`;

const Boxed = styled.div`
  display: flex;
  border: 2px solid ${LINE};

  input {
    flex: 1;
    width: 0;
    min-width: 0;
    border: 0;
    padding: 0;
    background: none;
    font-family: Lato, 'Open Sans', sans-serif;
    font-size: 38px;
  }
`;

const NameBox = styled(Boxed)`
  flex: 0 0 261px;
  padding-left: 10px;
`;

const FormulaButtons = styled(Boxed)`
  flex: 0 0 182px;
  margin-right: 5px;
`;

const FormulaBox = styled(Boxed)`
  flex: 1;
  padding-left: 22px;
`;

const Dots = styled.span`
  width: 2px;
  height: 18px;
  align-self: center;
  margin: 0 23px;
  border-left: 3px dotted #a5a5a8;
`;

const Fx = styled.span`
  font-family: 'Liberation Serif', serif;
  font-style: italic;
  font-weight: 700;
  font-size: 37px;
  color: #737375;
`;

const SheetArea = styled.main`
  display: flex;
  align-items: flex-start;
`;

const GridWrap = styled.div`
  flex: 1;
  min-width: 0;
`;

const Grid = styled.table`
  width: 100%;
  table-layout: fixed;
  border-collapse: separate;
  border-spacing: 0;
  font-family: Lato, 'Open Sans', sans-serif;
  font-size: 38px;
  line-height: 50px;

  /* two rows in every nine are a pixel shorter */
  tbody tr {
    height: 58px;
  }

  tbody tr:nth-child(9n + 5), tbody tr:nth-child(9n) {
    height: 57px;
  }
`;

const HeadCol = styled.col`
  width: 84px;
`;

const RestCol = styled.col`
  width: 22px;
`;

const headCell = css`
  padding: 4px 0 0;
  font-weight: 400;
  color: #444;
`;

const Corner = styled.td`
  padding: 6px 6px 0 0;
  border-bottom: 2px solid #dddde0;

  svg {
    margin-left: auto;
  }
`;

const ColumnHead = styled.th`
  ${headCell}
  height: 58px;
  border-bottom: 2px solid #a9a9ac;
  background: linear-gradient(transparent, ${LINE}) right / 2px 100% no-repeat;
  ${(props) => props.$last && css`
    background: none;
  `}
  ${(props) => props.$selected && css`
    background: #e1e0e3;
    border-bottom: 3px solid ${GREEN};
    color: ${GREEN};
  `}
`;

const RowHead = styled.th`
  ${headCell}
  padding: 2px 0 0;
  border-right: 2px solid #a9a9ac;
  border-bottom: 2px solid #e2e2e5;
  ${(props) => props.$selected && css`
    background: #e1e0e3;
    border-right: 3px solid ${GREEN};
    border-bottom-color: #cfcfd2;
    color: ${GREEN};
  `}
`;

const Cell = styled.td`
  padding: 2px 6px 0;
  overflow: hidden;
  white-space: nowrap;
  font-size: 40px;
  color: #000;
  text-align: ${(props) => props.$align};
  border-right: 2px solid ${(props) => (props.$last ? '#a9a9ac' : LINE)};
  border-bottom: 2px solid ${LINE};
  ${(props) => props.$filled && css`
    background: #c6c5c6;
    border-bottom-color: #aeadb0;
  `}
  ${(props) => props.$spill && css`
    position: relative;
    overflow: visible;
  `}
  ${(props) => props.$open && css`
    border-right-color: transparent;
  `}
`;

const CutRow = styled.tr`
  && {
    height: 10px;
  }

  td {
    padding: 0;
    line-height: 0;
    border-bottom: 0;
  }
`;

const Selection = styled.div`
  position: absolute;
  top: -3px;
  left: -3px;
  right: -3px;
  height: 871px;
  border: 3px solid ${GREEN};
  box-shadow: inset 0 0 0 2px #fff;
`;

const FillHandle = styled.span`
  position: absolute;
  right: -5px;
  bottom: -5px;
  width: 10px;
  height: 10px;
  background: ${GREEN};
  border: 1px solid #fff;
`;

const AutoFill = styled.button`
  position: absolute;
  top: 868px;
  left: 100%;
  width: 34px;
  height: 34px;
  margin-left: 3px;
  padding: 3px;
  border: 2px solid #b3b3b6;
  background: #fff;
`;

const VerticalScroll = styled.div`
  display: flex;
  flex-direction: column;
  align-self: stretch;
  width: 25px;
  margin: 3px 5px 0 6px;
`;

const ScrollButton = styled.button`
  display: flex;
  align-items: center;
  justify-content: center;
  flex: 0 0 25px;
  background: #fff;
  border: 2px solid #b6b6b9;
`;

const Thumb = styled.div`
  background: #fff;
  border: 2px solid #b6b6b9;
`;

const VerticalThumb = styled(Thumb)`
  flex: 954;
  border-top-width: 1px;
`;

const VerticalTrack = styled.div`
  flex: 105;
  background: #f1f0f2;
`;

const Triangle = styled.i`
  width: 0;
  height: 0;
  border: 6px solid transparent;
  color: ${(props) => (props.$pale ? '#c6c5c8' : GREY)};
  ${(props) => props.$dir === 'up' && 'border-top: 0; border-bottom: 7px solid;'}
  ${(props) => props.$dir === 'down' && 'border-bottom: 0; border-top: 7px solid;'}
  ${(props) => props.$dir === 'left' && 'border-left: 0; border-right: 7px solid;'}
  ${(props) => props.$dir === 'right' && 'border-right: 0; border-left: 7px solid;'}
`;

const SheetTabs = styled.div`
  display: flex;
  flex: 1 0 46px;
  background: #f6f5f8;
`;

const SheetNav = styled.div`
  display: flex;
  flex: 0 0 167px;
  padding-left: 24px;
  border-top: 2px solid #b3b3b6;
  background: linear-gradient(#b3b3b6, #b3b3b6) right / 2px 32px no-repeat;
`;

const SheetTab = styled.button`
  flex: 0 0 133px;
  height: 42px;
  padding-right: 4px;
  border-top: 2px solid #b3b3b6;
  font-size: 20px;
  ${(props) => props.$active && css`
    flex-basis: 100px;
    padding: 2px 0 0;
    background: #fff;
    border: 2px solid #b3b3b6;
    border-top: 0;
    border-bottom: 3px solid ${GREEN};
    font-size: 19px;
    color: ${GREEN};
    font-weight: 700;
  `}
`;

const SheetRest = styled.div`
  display: flex;
  flex: 1;
  justify-content: space-between;
  align-items: center;
  padding: 0 34px 0 45px;
  border-top: 2px solid #b3b3b6;

  ${Dots} {
    margin-left: auto;
  }
`;

const HorizontalScroll = styled.div`
  display: flex;
  flex: 0 1 755px;
  height: 25px;
  background: #ecebed;
`;

const HorizontalThumb = styled(Thumb)`
  flex: 1;
  margin-right: 80px;
  border-left-width: 1px;
`;

const Status = styled.footer`
  display: flex;
  align-items: center;
  height: 38px;
  margin: 0 -2px;
  padding: 0 34px 0 13px;
  background: ${GREEN};
  font-size: 18px;
  line-height: 34px;
  color: #e9f5e6;
`;

const Ready = styled.span`
  width: 80px;
`;

const Count = styled.span`
  margin-left: auto;
  margin-right: 31px;
`;

const View = styled.button`
  display: flex;
  align-items: center;
  justify-content: center;
  flex: 0 0 62px;
  height: 34px;
  background: ${(props) => (props.$active ? '#0b6331' : 'none')};
`;

const Zoom = styled.input`
  appearance: none;
  width: 166px;
  height: 18px;
  margin: 0 0 0 1px;
  background: linear-gradient(#e9f5e6, #e9f5e6) center / 100% 2px no-repeat;

  &::-webkit-slider-thumb {
    appearance: none;
    width: 7px;
    height: 18px;
    background: #fff;
  }
`;

const Percent = styled.span`
  margin-left: 17px;
`;
